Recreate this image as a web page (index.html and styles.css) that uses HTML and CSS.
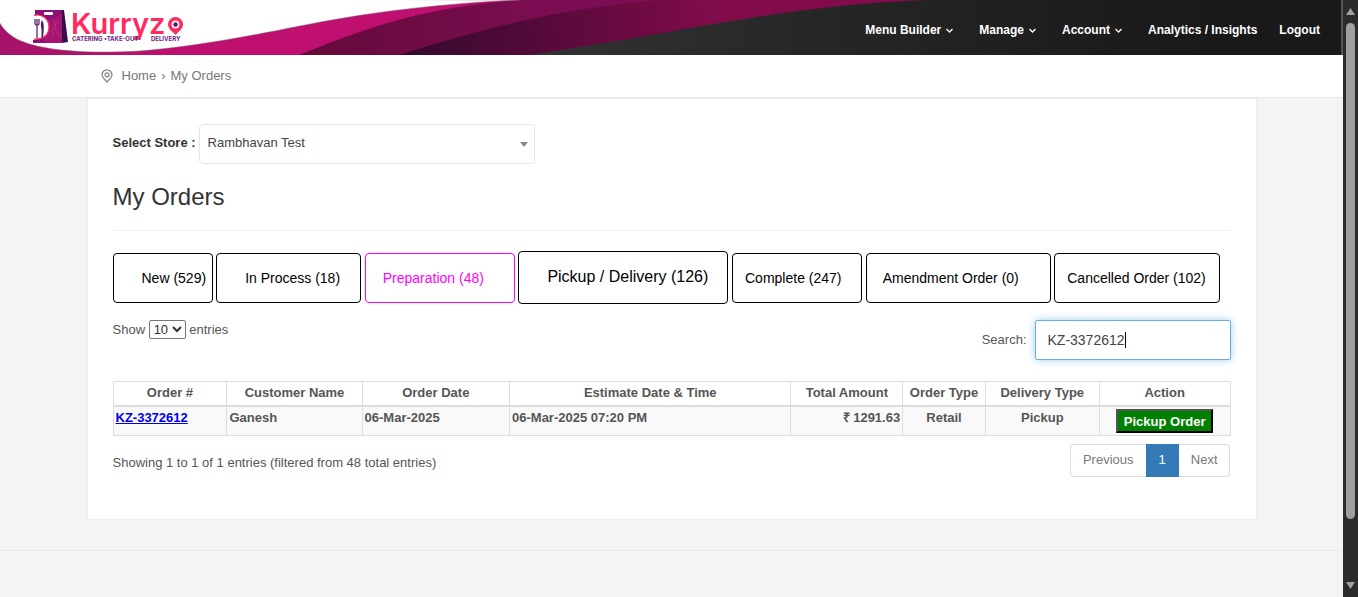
FILE: index.html
```html
<!DOCTYPE html>
<html lang="en">
<head>
<meta charset="utf-8">
<title>My Orders</title>
<link rel="stylesheet" href="styles.css">
</head>
<body>
<div class="page">
  <header class="topbar">
    <svg class="waves" viewBox="0 0 1343 55" preserveAspectRatio="xMinYMin slice" aria-hidden="true">
      <defs>
        <linearGradient id="dark" x1="0" x2="1"><stop offset=".4" stop-color="#323232"/><stop offset=".65" stop-color="#242424"/><stop offset=".9" stop-color="#191919"/></linearGradient>
        <linearGradient id="plum" gradientUnits="userSpaceOnUse" x1="300" x2="560" y1="55" y2="0"><stop offset="0" stop-color="#640a3a"/><stop offset="1" stop-color="#7c0d53"/></linearGradient>
        <linearGradient id="wine" gradientUnits="userSpaceOnUse" x1="400" x2="720" y1="55" y2="10"><stop offset="0" stop-color="#330a2c"/><stop offset=".75" stop-color="#6e0a42"/><stop offset="1" stop-color="#820c4b"/></linearGradient>
        <linearGradient id="pink" gradientUnits="userSpaceOnUse" x1="0" x2="200" y1="0" y2="0"><stop offset="0" stop-color="#a5126a"/><stop offset="1" stop-color="#c0106f"/></linearGradient>
      </defs>
      <path fill="url(#dark)" d="M0 0H1343V55H0Z"/>
      <path fill="url(#wine)" d="M400 0H930C850 2 760 15 690 28C640 37 580 47 530 55H390Z"/>
      <path fill="url(#plum)" d="M0 0H660C560 9 490 26 399 55H290Z"/>
      <path fill="url(#pink)" d="M0 0H520C430 6 370 26 299 55H0Z"/>
      <path fill="#fff" stroke="#7d5068" stroke-width=".5" d="M-2 -2L520 0C430 4 360 14 300 26C240 38 190 47 140 51C90 54 45 51 21 41C8 35 3 29 -2 20Z"/>
    </svg>
    <a class="logo" href="#" aria-label="Kurryzo home">
      <svg width="154" height="36" viewBox="0 0 154 36" aria-hidden="true">
        <path fill="#8a1173" d="M3 1H30V34H1V31H3Z"/>
        <path fill="#b01874" d="M15 12L30 5V34H12Z" opacity=".7"/>
        <path fill="#35104f" d="M30 1H32L36 33 30 34Z"/>
        <rect x="12" y="3" width="9" height="3" rx="1" fill="#fff"/>
        <path d="M1 6.500C10 4 17 10 17 18S11 31 1 30Z" fill="#fff" stroke="#f82c66" stroke-width="1.300"/>
        <path d="M0 0H2V31H0Z" fill="#fff"/>
        <path d="M3 10V15Q5 18 7 15V10M5 10V29" fill="none" stroke="#4b1768" stroke-width="1.200"/>
        <path d="M10 11Q13 15 11 28L9.500 29V20Q8 15 10 11Z" fill="#4b1768"/>
        <path d="M21 28C19 21 22 15 28 12M23 12V20L29 29" fill="none" stroke="#c43283" stroke-width=".8"/>
        <text class="brand" x="39" y="25">Kurryz</text>
        <path d="M138 20H149L143.500 26Z" fill="#ff2b60"/>
        <circle cx="143.500" cy="15.500" r="5.700" fill="#fff" stroke="#ff2b60" stroke-width="3.600"/>
        <circle cx="143.500" cy="15.500" r="2.200" fill="#5b166f"/>
        <text class="tagline" x="40" y="32">CATERING •TAKE-OUT•</text>
        <text class="tagline" x="119" y="32">DELIVERY</text>
      </svg>
    </a>
    <nav class="menu">
      <a href="#">Menu Builder <svg width="7" height="5" viewBox="0 0 7 5"><path d="M.5 1 3.500 4 6.500 1"/></svg></a>
      <a href="#">Manage <svg width="7" height="5" viewBox="0 0 7 5"><path d="M.5 1 3.500 4 6.500 1"/></svg></a>
      <a href="#">Account <svg width="7" height="5" viewBox="0 0 7 5"><path d="M.5 1 3.500 4 6.500 1"/></svg></a>
      <a href="#">Analytics / Insights</a>
      <a href="#">Logout</a>
    </nav>
  </header>

  <div class="crumb-bar">
    <div class="container crumbs">
      <svg width="12" height="14" viewBox="0 0 12 14" aria-hidden="true"><path d="M6 13C3 10 1 8 1 5.800A5 5 0 0 1 11 5.800C11 8 9 10 6 13Z"/><circle cx="6" cy="5.800" r="2"/></svg>
      <a href="#">Home</a><span class="sep">›</span><span>My Orders</span>
    </div>
  </div>

  <main class="container card">
    <div class="store">
      <label for="store">Select Store :</label>
      <div class="store-box">
        <select id="store"><option>Rambhavan Test</option></select>
      </div>
    </div>
    <h1>My Orders</h1>
    <div class="tabs">
      <button class="tab t-new">New (529)</button>
      <button class="tab t-process">In Process (18)</button>
      <button class="tab t-prep">Preparation (48)</button>
      <button class="tab t-pickup">Pickup / Delivery (126)</button>
      <button class="tab t-complete">Complete (247)</button>
      <button class="tab t-amend">Amendment Order (0)</button>
      <button class="tab t-cancel">Cancelled Order (102)</button>
    </div>
    <div class="tools">
      <label class="length">Show <select><option>10</option></select> entries</label>
      <div class="search">
        <label for="search">Search:</label>
        <div class="search-box"><input id="search" type="text" value="KZ-3372612"><span class="caret"></span></div>
      </div>
    </div>
    <table>
      <colgroup><col class="c-order"><col class="c-name"><col class="c-date"><col class="c-estimate"><col class="c-total"><col class="c-type"><col class="c-delivery"><col class="c-action"></colgroup>
      <thead>
        <tr><th>Order #</th><th>Customer Name</th><th>Order Date</th><th>Estimate Date &amp; Time</th><th>Total Amount</th><th>Order Type</th><th>Delivery Type</th><th>Action</th></tr>
      </thead>
      <tbody>
        <tr><td><a href="#">KZ-3372612</a></td><td>Ganesh</td><td>06-Mar-2025</td><td>06-Mar-2025 07:20 PM</td><td class="right">₹ 1291.63</td><td class="center">Retail</td><td class="center">Pickup</td><td class="center"><button class="pickup">Pickup Order</button></td></tr>
      </tbody>
    </table>
    <div class="table-foot">
      <div>Showing 1 to 1 of 1 entries (filtered from 48 total entries)</div>
      <nav class="pager"><a href="#">Previous</a><a href="#" class="current">1</a><a href="#">Next</a></nav>
    </div>
  </main>
  <footer class="footer"></footer>
</div>
<div class="scroll" aria-hidden="true">
  <svg width="9" height="7" viewBox="0 0 9 7"><path d="M4.500 0 9 7H0Z"/></svg>
  <div class="track"><div class="thumb"></div></div>
  <svg width="9" height="7" viewBox="0 0 9 7"><path d="M0 0H9L4.500 7Z"/></svg>
</div>
</body>
</html>
```

FILE: styles.css
```css
* { box-sizing: border-box; }
body {
  margin: 0;
  min-height: 100vh;
  display: grid;
  grid-template-columns: 1fr 15px;
  background: #f4f4f4;
  color: #555;
  font: 13px/20px "Liberation Sans", Arial, sans-serif;
}
a { text-decoration: none; color: inherit; }
button, input, select { font-family: inherit; }
.page { min-width: 0; display: flex; flex-direction: column; }
.container { width: 100%; max-width: 1170px; margin: 0 auto; }

.topbar {
  position: relative;
  height: 55px;
  display: flex;
  justify-content: space-between;
  background: #1a1a1a;
  border-right: 2px solid #555;
}
.waves { position: absolute; inset: 0; width: 100%; height: 100%; }
.logo { position: relative; margin: 9px 0 0 32px; height: 36px; }
.logo svg { overflow: visible; }
.brand { font: 600 29px Inter, sans-serif; fill: #ff2b60; }
.tagline { font: 700 6px Inter, sans-serif; fill: #6b1a7c; }
.menu {
  position: relative;
  display: flex;
  gap: 22px;
  align-items: center;
  padding: 0 21px 0 0;
  height: 60px;
  color: #fff;
  font-size: 12px;
  font-weight: bold;
}
.menu a { display: flex; align-items: center; gap: 5px; }
.menu a:nth-child(-n+3) { margin-right: 4px; }
.menu svg { fill: none; stroke: #fff; stroke-width: 1.300; }

.crumb-bar { background: #fff; border-bottom: 1px solid #e9e9e9; height: 43px; }
.crumbs { display: flex; align-items: center; height: 42px; padding-left: 14px; color: #777; }
.crumbs svg { fill: none; stroke: #808080; stroke-width: 1.200; margin-right: 9px; }
.sep { margin: 0 5px; }

.card { background: #fff; border: 1px solid #eee; border-radius: 2px; padding: 25px 25px 42px; }
.store { display: flex; align-items: flex-start; gap: 3px; color: #333; }
.store label { font-weight: bold; line-height: 38px; }
.store-box { position: relative; width: 336px; }
.store-box::after {
  content: "";
  position: absolute;
  right: 7px;
  top: 18px;
  border: 4px solid transparent;
  border-top: 5px solid #888;
  border-bottom: 0;
}
.store-box select {
  appearance: none;
  width: 100%;
  height: 40px;
  padding: 0 8px 3px;
  border: 1px solid #e5e5e5;
  border-radius: 4px;
  background: #fff;
  color: #444;
  font-size: 13px;
}
h1 {
  margin: 17px 0 20px;
  padding-bottom: 17px;
  border-bottom: 1px solid #eee;
  color: #333;
  font-size: 24px;
  font-weight: normal;
  line-height: 32px;
}

.tabs { line-height: 0; }
.tab {
  height: 50px;
  padding: 0;
  border: 1px solid #000;
  border-radius: 4px;
  background: #fff;
  color: #000;
  font-size: 14px;
  text-align: left;
  white-space: nowrap;
  vertical-align: middle;
}
.t-new { width: 100px; padding-left: 28px; }
.t-process { width: 145px; padding-left: 28px; }
.t-prep { width: 150px; padding-left: 17px; border-color: #f0f; color: #f0f; }
.t-pickup { width: 210px; height: 53px; padding: 0 0 2px 28px; font-size: 16px; }
.t-complete { width: 130px; padding-left: 12px; }
.t-amend { width: 185px; padding-left: 16px; }
.t-cancel { width: 166px; padding-left: 12px; }

.tools { display: flex; justify-content: space-between; margin: 16px 0 21px; }
.length select { height: 19px; margin: 0; padding: 0; border: 1px solid #767676; border-radius: 2px; background: #fff; color: #333; font-size: 13px; }
.search { display: flex; align-items: center; gap: 8px; }
.search-box { position: relative; }
.search input {
  display: block;
  width: 196px;
  height: 40px;
  padding: 0 12px;
  border: 1px solid #66afe9;
  border-radius: 2px;
  outline: 0;
  box-shadow: 0 0 8px rgba(102, 175, 233, .6);
  color: #444;
  font-size: 14px;
}
.caret { position: absolute; left: 90px; top: 12px; width: 1px; height: 16px; background: #000; }

table { width: 100%; table-layout: fixed; border-collapse: collapse; font-weight: bold; }
.c-order { width: 10.2%; }
.c-name { width: 12.1%; }
.c-date { width: 13.2%; }
.c-estimate { width: 25.2%; }
.c-total { width: 10%; }
.c-type { width: 7.400%; }
.c-delivery { width: 10.2%; }
th, td { border: 1px solid #ddd; padding: 1px 2px 2px; }
th { border-bottom-width: 2px; text-align: center; }
td { background: #f9f9f9; vertical-align: top; }
td a { color: #00e; text-decoration: underline; }
.right { text-align: right; }
.center { text-align: center; }
.pickup { display: block; margin: 1px auto 0; height: 24px; padding: 0 6px; border: 2px outset #000; background: #008000; color: #fff; font-size: 13px; font-weight: bold; }

.table-foot { display: flex; justify-content: space-between; padding-top: 8px; }
.table-foot > div { padding-top: 9px; }
.pager { display: flex; color: #777; margin-right: 1px; }
.pager a { height: 33px; padding: 5px 12px; border: 1px solid #ddd; background: #fff; }
.pager a:first-child { border-right: 0; border-radius: 4px 0 0 4px; }
.pager a:last-child { border-left: 0; border-radius: 0 4px 4px 0; padding-right: 11px; }
.pager .current { background: #337ab7; border-color: #337ab7; color: #fff; }

.footer { margin-top: 30px; border-top: 1px solid #e9e9e9; }

.scroll { display: flex; flex-direction: column; align-items: center; padding: 8px 0; background: #2b2b2b; }
.scroll svg { fill: #9f9f9f; }
.track { flex: 1; padding: 8px 0; }
.thumb { width: 9px; height: 90%; border-radius: 5px; background: #9f9f9f; }
```
